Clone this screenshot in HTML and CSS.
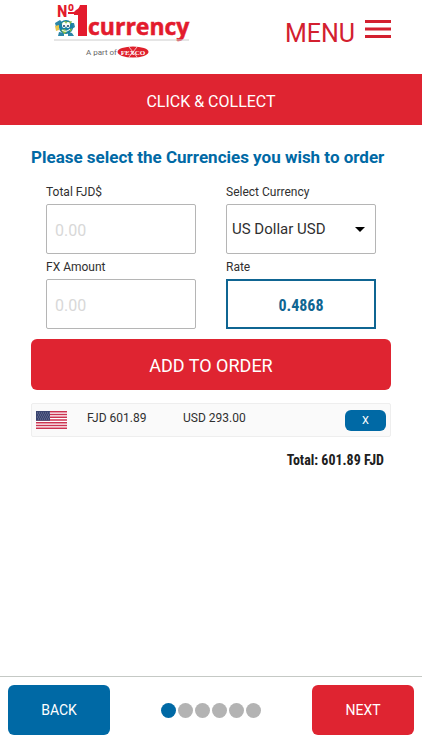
FILE: index.html
```html
<!DOCTYPE html>
<html lang="en">
<head>
    <meta charset="UTF-8">
    <meta name="viewport" content="width=device-width, initial-scale=1.0">
    <title>Click &amp; Collect</title>
    <link rel="stylesheet" href="styles.css">
</head>
<body>
    <header class="header">
        <a class="logo" href="#" aria-label="No1 Currency, a part of Fexco">
            <svg width="144" height="64" viewBox="0 -4 144 64">
                <g class="logo-name">
                    <text class="logo-no" x="3" y="13" font-size="17">N</text>
                    <text class="logo-no" x="14" y="7" font-size="12">o</text>
                    <path d="M14 8h7v2h-7z"/>
                    <path d="M22 6q3-1 4-5h7v31h-9V11h-4V8z"/>
                    <text class="logo-currency" x="34" y="31" font-size="23">currency</text>
                </g>
                <!-- globe mascot -->
                <path d="M1 19l5-3 3 3-2 5-5-1zM17 19l3 0 1 4-3 2zM5 28l5 1 0 3-6 0zM14 28l4 1 2 3-6 0z" fill="#2b86a8"/>
                <circle cx="12" cy="23" r="7" fill="#187fa5"/>
                <path d="M7 20l4-3 3 1 4-1-2 4-4 0zM7 26l4-1 2 3-3 2zM15 26l3-2-1 4z" fill="#86b943"/>
                <ellipse cx="10" cy="21" rx="2" ry="3" fill="#fff"/>
                <ellipse cx="14" cy="21" rx="2" ry="3" fill="#fff"/>
                <circle cx="10" cy="22" r="1" fill="#173b65"/>
                <circle cx="14" cy="22" r="1" fill="#173b65"/>
                <path d="M8 26q4 3 8-1" fill="none" stroke="#fff"/>
                <path d="M1 22l4-1v5l-3 1z" fill="#e7c64b"/>
                <path d="M0 36h135" stroke="#ccc"/>
                <text class="logo-part" x="32" y="51">A part of</text>
                <ellipse cx="79" cy="48" rx="15.500" ry="5.500" fill="#df202b"/>
                <text class="logo-fexco" x="79" y="51" text-anchor="middle">FEXCO</text>
                <path d="M75 43l8 10M83 43l-8 10" stroke="#fff" stroke-width=".7"/>
            </svg>
        </a>
        <button class="menu" type="button">
            MENU
            <svg width="26" height="20" viewBox="0 0 26 20" aria-hidden="true">
                <path d="M0 2.500h26M0 10h26M0 17.500h26" stroke="currentColor" stroke-width="3"/>
            </svg>
        </button>
    </header>

    <h1 class="title-bar">CLICK &amp; COLLECT</h1>

    <main class="order">
        <h2>Please select the Currencies you wish to order</h2>

        <form class="fields">
            <div class="field">
                <label for="total">Total FJD$</label>
                <input id="total" type="text" placeholder="0.00">
            </div>
            <div class="field">
                <label for="currency">Select Currency</label>
                <select id="currency">
                    <option>US Dollar USD</option>
                </select>
            </div>
            <div class="field">
                <label for="amount">FX Amount</label>
                <input id="amount" type="text" placeholder="0.00">
            </div>
            <div class="field">
                <label for="rate">Rate</label>
                <input id="rate" class="rate" type="text" value="0.4868" readonly>
            </div>
        </form>

        <button class="btn btn-add" type="button">ADD TO ORDER</button>

        <div class="order-item">
            <svg class="flag" width="31" height="18" viewBox="0 0 31 18" role="img" aria-label="United States">
                <path d="M0 0h31v18H0z" fill="#fff"/>
                <path d="M0 .7h31M0 3.500h31M0 6.300h31M0 9h31M0 11.800h31M0 14.500h31M0 17.300h31" stroke="#cc3350" stroke-width="1.500"/>
                <path d="M0 0h14v9.700H0z" fill="#39446f"/>
                <path d="M1 2h13M2 4h12M1 6h13M2 8h12" stroke="#8990ad" stroke-width=".8" stroke-dasharray="1 1"/>
            </svg>
            <span class="from">FJD 601.89</span>
            <span class="to">USD 293.00</span>
            <button class="btn btn-remove" type="button" aria-label="Remove">X</button>
        </div>

        <p class="order-total">Total: 601.89 FJD</p>
    </main>

    <footer class="footer">
        <button class="btn btn-back" type="button">BACK</button>
        <div class="steps">
            <span class="step active"></span>
            <span class="step"></span>
            <span class="step"></span>
            <span class="step"></span>
            <span class="step"></span>
            <span class="step"></span>
        </div>
        <button class="btn btn-next" type="button">NEXT</button>
    </footer>
</body>
</html>
```

FILE: styles.css
```css
* {
    box-sizing: border-box;
}
body {
    display: flex;
    flex-direction: column;
    min-height: 100vh;
    margin: 0;
    background: #fff;
    color: #303030;
    font-family: Roboto, sans-serif;
}
button, input, select {
    font-family: inherit;
}
.header {
    display: flex;
    justify-content: space-between;
    align-items: flex-start;
    padding: 0 31px 10px 54px;
}
.logo svg {
    display: block;
    overflow: visible;
}
.logo-name {
    fill: #e31b2d;
    font-family: "Open Sans", sans-serif;
    font-weight: 700;
}
.logo-no {
    font-family: "Roboto Condensed", Roboto, sans-serif;
}
.logo-currency {
    stroke: #e31b2d;
    stroke-width: 0.5px;
}
.logo-part {
    fill: #666;
    font-family: Roboto, sans-serif;
    font-size: 8px;
}
.logo-fexco {
    fill: #fff;
    font-family: "Liberation Serif", serif;
    font-size: 7px;
    font-weight: bold;
}
.menu {
    display: flex;
    align-items: flex-start;
    gap: 10px;
    margin-top: 18px;
    padding: 0;
    border: 0;
    background: none;
    color: #d3202f;
    font-size: 25px;
    line-height: 32px;
}
.menu svg {
    margin-top: 1px;
}
.title-bar {
    margin: 0;
    padding: 16px 14px 11px;
    background: #df2431;
    color: #fff;
    font-size: 16px;
    font-weight: 400;
    line-height: 24px;
    text-align: center;
}
.order {
    flex: 1;
    padding: 20px 31px;
}
.order h2 {
    margin: 0 0 14px;
    color: #0069a5;
    font-size: 17px;
    font-weight: 700;
    line-height: 24px;
    white-space: nowrap;
}
.fields {
    display: grid;
    grid-template-columns: 1fr 1fr;
    gap: 4px 30px;
    padding: 0 15px;
}
.field label {
    display: block;
    padding-bottom: 2px;
    font-size: 12px;
    line-height: 19px;
}
.field input,
.field select {
    display: block;
    width: 100%;
    height: 50px;
    padding: 2px 8px 0;
    border: 1px solid #b5b5b5;
    border-radius: 2px;
    background: #fff;
    color: #303030;
    font-size: 16px;
}
.field input::placeholder {
    color: #d8d8d8;
}
.field select {
    appearance: none;
    padding: 0 5px;
    background: url("data:image/svg+xml,%3Csvg xmlns='http://www.w3.org/2000/svg' width='10' height='5'%3E%3Cpath d='M0 0h10L5 5z'/%3E%3C/svg%3E") no-repeat right 10px center;
    font-size: 15px;
}
.field .rate {
    border: 2px solid #0f6592;
    border-radius: 0;
    color: #0f6592;
    font-family: "Roboto Condensed", Roboto, sans-serif;
    font-weight: 700;
    text-align: center;
}
.btn {
    border: 0;
    border-radius: 6px;
    background: #df2431;
    color: #fff;
    font-size: 14px;
}
.btn-add {
    width: 100%;
    height: 51px;
    margin-top: 10px;
    padding-top: 3px;
    font-size: 18px;
}
.order-item {
    display: flex;
    align-items: center;
    height: 34px;
    margin-top: 13px;
    padding: 0 4px;
    border: 1px solid #eee;
    border-radius: 2px;
    background: #fafafa;
    font-size: 12px;
    line-height: 18px;
}
.order-item span {
    padding-bottom: 4px;
}
.from {
    width: 96px;
    margin-left: 20px;
}
.btn-remove {
    width: 41px;
    height: 21px;
    margin-left: auto;
    background: #0069a5;
    font-size: 11px;
}
.order-total {
    margin: 12px 7px 0;
    color: #202020;
    font-family: "Roboto Condensed", Roboto, sans-serif;
    font-size: 14px;
    font-weight: 700;
    line-height: 22px;
    text-align: right;
}
.footer {
    display: flex;
    justify-content: space-between;
    align-items: center;
    padding: 8px 8px 15px;
    border-top: 1px solid #c5c9c5;
}
.footer .btn {
    width: 102px;
    height: 50px;
}
.footer .btn-back {
    background: #0069a5;
}
.steps {
    display: flex;
    gap: 2px;
}
.step {
    width: 15px;
    height: 15px;
    border-radius: 50%;
    background: #b3b3b3;
}
.step.active {
    background: #0069a5;
}
```
